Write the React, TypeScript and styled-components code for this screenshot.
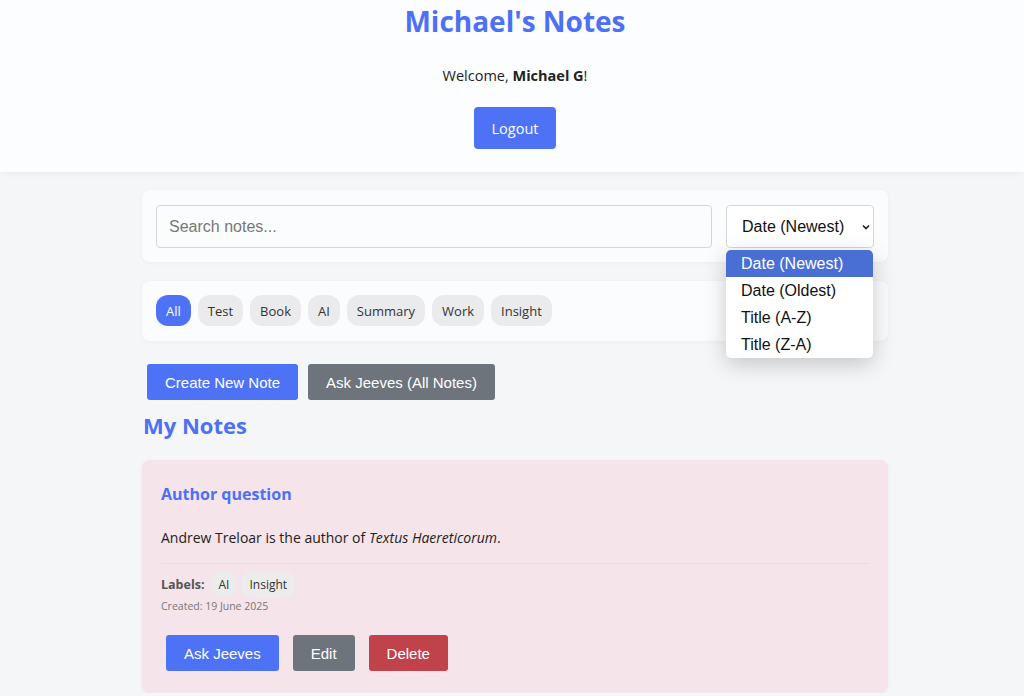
import React from 'react';
import styled, { createGlobalStyle } from 'styled-components';

const GlobalStyle = createGlobalStyle`
  * { box-sizing: border-box; }
  body {
    margin: 0;
    background: #f5f6f8;
    font-family: "Open Sans", "Noto Sans", sans-serif;
    color: #222;
  }
  #root { padding-left: 6px; }
`;

const Header = styled.header`
  background: #fcfdfe;
  box-shadow: 0 2px 6px rgba(0, 0, 0, 0.04);
  text-align: center;
  padding: 2px 0 22px;
  height: 172px;
  margin-left: -6px;
  padding-left: 6px;
`;

const SiteTitle = styled.h1`
  margin: 0;
  font-size: 28px;
  font-weight: 700;
  color: #4d70f5;
  line-height: 38px;
`;

const Welcome = styled.p`
  margin: 25px 0 0;
  font-size: 14.5px;
  line-height: 22px;
  color: #222;
`;

const LogoutButton = styled.button`
  margin-top: 20px;
  height: 42px;
  padding: 0 18px;
  border: none;
  border-radius: 4px;
  background: #4d72f6;
  color: #fff;
  font-family: "Open Sans", sans-serif;
  font-size: 14.5px;
`;

const Main = styled.main`
  width: 746px;
  margin: 18px auto 0;
`;

const Card = styled.div`
  background: #fbfcfd;
  border-radius: 8px;
  box-shadow: 0 1px 4px rgba(0, 0, 0, 0.04);
  padding: 14px;
  position: relative;
`;

const SearchRow = styled(Card)`
  display: flex;
  gap: 14px;
  align-items: center;
  padding: 15px 14px 14px;
`;

const SearchInput = styled.input`
  flex: 1;
  height: 43px;
  border: 1px solid #d4d6da;
  border-radius: 4px;
  background: #fbfcfd;
  padding: 0 12px;
  font-family: "Liberation Sans", Arial, sans-serif;
  font-size: 16px;
  &::placeholder { color: #777; }
`;

const SelectBox = styled.div`
  width: 148px;
  height: 43px;
  border: 1px solid #d4d6da;
  border-radius: 4px;
  background: #fff;
  display: flex;
  align-items: center;
  justify-content: space-between;
  padding: 0 2px 0 15px;
  font-family: "Liberation Sans", Arial, sans-serif;
  font-size: 16px;
  color: #111;
  position: relative;
`;

const DropMenu = styled.ul`
  position: absolute;
  top: 44px;
  left: -1px;
  width: 147px;
  margin: 0;
  padding: 0;
  list-style: none;
  background: #fff;
  border-radius: 5px;
  box-shadow: 0 6px 22px rgba(0, 0, 0, 0.2);
  z-index: 10;
  overflow: hidden;
`;

const DropItem = styled.li<{ $active?: boolean }>`
  height: 27px;
  line-height: 27px;
  padding-left: 15px;
  background: ${({ $active }) => ($active ? '#4a6fd4' : 'transparent')};
  color: ${({ $active }) => ($active ? '#fff' : '#111')};
`;

const FilterRow = styled(Card)`
  margin-top: 19px;
  display: flex;
  gap: 7px;
  padding: 14px 14px 15px;
`;

const Chip = styled.span<{ $active?: boolean }>`
  height: 31px;
  padding: 0 10px;
  border-radius: 12px;
  display: inline-flex;
  align-items: center;
  font-size: 13px;
  background: ${({ $active }) => ($active ? '#4d72f6' : '#ebebed')};
  color: ${({ $active }) => ($active ? '#fff' : '#333')};
`;

const Actions = styled.div`
  display: flex;
  gap: 10px;
  padding: 23px 5px 0;
`;

const Button = styled.button<{ $variant?: 'primary' | 'secondary' | 'danger' }>`
  height: 36px;
  padding: 0 18px;
  border: none;
  border-radius: 3px;
  font-family: "Liberation Sans", Arial, sans-serif;
  font-size: 15px;
  color: #fff;
  background: ${({ $variant }) =>
    $variant === 'secondary' ? '#6d747c' : $variant === 'danger' ? '#c0434c' : '#4d72f6'};
`;

const SectionTitle = styled.h2`
  margin: 10px 0 0 1px;
  font-size: 22px;
  line-height: 30px;
  font-weight: 700;
  color: #4d70f5;
`;

const NoteCard = styled.div`
  margin-top: 20px;
  background: #f5e4ea;
  border-radius: 8px;
  box-shadow: 0 1px 4px rgba(0, 0, 0, 0.05);
  padding: 20px 19px 22px;
`;

const NoteTitle = styled.h3`
  margin: 2px 0 0;
  font-size: 16px;
  line-height: 24px;
  font-weight: 700;
  color: #4d70f5;
`;

const NoteText = styled.p`
  margin: 21px 0 0;
  font-size: 14px;
  line-height: 22px;
  color: #222;
  padding-bottom: 14px;
  border-bottom: 1px solid #e8dde2;
`;

const LabelRow = styled.div`
  margin-top: 7px;
  display: flex;
  align-items: center;
  gap: 4px;
  font-size: 12.5px;
`;

const LabelName = styled.strong`
  color: #555;
  margin-right: 2px;
`;

const LabelChip = styled.span`
  background: #ececec;
  border-radius: 12px;
  padding: 0 8px;
  height: 27px;
  display: inline-flex;
  align-items: center;
  font-size: 12px;
  color: #333;
`;

const Created = styled.div`
  font-size: 10.5px;
  color: #777;
  margin-top: 1px;
`;

const NoteActions = styled.div`
  display: flex;
  gap: 14px;
  margin-top: 22px;
  padding-left: 5px;
`;

const Chevron = () => (
  <svg width="10" height="10" viewBox="0 0 10 10">
    <path d="M2 3.5 L5 6.5 L8 3.5" fill="none" stroke="#222" strokeWidth="1.6" />
  </svg>
);

const labels = ['All', 'Test', 'Book', 'AI', 'Summary', 'Work', 'Insight'];
const sortOptions = ['Date (Newest)', 'Date (Oldest)', 'Title (A-Z)', 'Title (Z-A)'];

export default function App() {
  return (
    <>
      <GlobalStyle />
      <Header>
        <SiteTitle>Michael's Notes</SiteTitle>
        <Welcome>
          Welcome, <strong>Michael G</strong>!
        </Welcome>
        <LogoutButton>Logout</LogoutButton>
      </Header>
      <Main>
        <SearchRow>
          <SearchInput placeholder="Search notes..." />
          <SelectBox>
            Date (Newest)
            <Chevron />
            <DropMenu>
              {sortOptions.map((o, i) => (
                <DropItem key={o} $active={i === 0}>
                  {o}
                </DropItem>
              ))}
            </DropMenu>
          </SelectBox>
        </SearchRow>
        <FilterRow>
          {labels.map((l, i) => (
            <Chip key={l} $active={i === 0}>
              {l}
            </Chip>
          ))}
        </FilterRow>
        <Actions>
          <Button>Create New Note</Button>
          <Button $variant="secondary">Ask Jeeves (All Notes)</Button>
        </Actions>
        <SectionTitle>My Notes</SectionTitle>
        <NoteCard>
          <NoteTitle>Author question</NoteTitle>
          <NoteText>
            Andrew Treloar is the author of <em>Textus Haereticorum</em>.
          </NoteText>
          <LabelRow>
            <LabelName>Labels:</LabelName>
            <LabelChip>AI</LabelChip>
            <LabelChip>Insight</LabelChip>
          </LabelRow>
          <Created>Created: 19 June 2025</Created>
          <NoteActions>
            <Button>Ask Jeeves</Button>
            <Button $variant="secondary">Edit</Button>
            <Button $variant="danger">Delete</Button>
          </NoteActions>
        </NoteCard>
      </Main>
    </>
  );
}
